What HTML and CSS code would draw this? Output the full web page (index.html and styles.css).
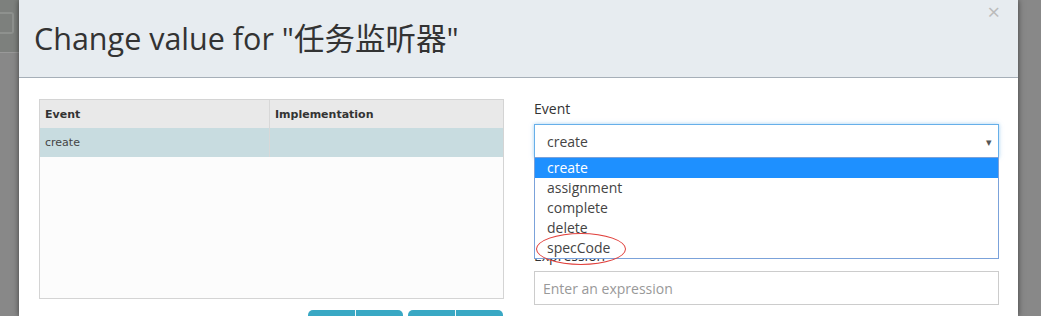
FILE: index.html
```html
<!DOCTYPE html>
<html lang="en">
<head>
    <meta charset="UTF-8">
    <title>Change value</title>
    <link rel="stylesheet" href="styles.css">
</head>
<body>
    <div class="backdrop">
        <div class="backdrop-bar">
            <span class="ghost-icon"></span>
        </div>
    </div>

    <div class="modal">
        <!-- Header -->
        <div class="modal-header">
            <h2 class="modal-title">Change value for "任务监听器"</h2>
            <span class="close">&times;</span>
        </div>

        <!-- Body -->
        <div class="modal-body">
            <div class="col-left">
                <div class="grid">
                    <div class="grid-head">
                        <div class="cell cell-event">Event</div>
                        <div class="cell">Implementation</div>
                    </div>
                    <div class="grid-row selected">
                        <div class="cell cell-event">create</div>
                        <div class="cell"></div>
                    </div>
                </div>
                <div class="btn-bar">
                    <div class="btn-group">
                        <span class="btn"></span>
                        <span class="btn"></span>
                    </div>
                    <div class="btn-group">
                        <span class="btn"></span>
                        <span class="btn"></span>
                    </div>
                </div>
            </div>

            <div class="col-right">
                <div class="form-group event-group">
                    <label class="form-label">Event</label>
                    <div class="select">
                        <span>create</span>
                        <span class="caret">&#9662;</span>
                    </div>
                    <ul class="select-list">
                        <li class="active">create</li>
                        <li>assignment</li>
                        <li>complete</li>
                        <li>delete</li>
                        <li>specCode</li>
                    </ul>
                    <span class="mark"></span>
                </div>
                <div class="form-group expr-group">
                    <label class="form-label">Expression</label>
                    <div class="input">Enter an expression</div>
                </div>
            </div>
        </div>
    </div>
</body>
</html>
```

FILE: styles.css
```css
body {
    margin: 0;
    height: 316px;
    overflow: hidden;
    background: #888;
    font-family: "Open Sans", "Noto Sans CJK SC", sans-serif;
    color: #333;
    display: flex;
    justify-content: flex-start;
}
.backdrop {
    width: 19px;
    flex-shrink: 0;
}
.backdrop-bar {
    height: 53px;
    background: #7d807d;
    border-bottom: 1px solid #999;
    padding-top: 12px;
    box-sizing: border-box;
}
.ghost-icon {
    display: block;
    width: 12px;
    height: 18px;
    border: 2px solid #8e918e;
    border-left: none;
    border-radius: 0 3px 3px 0;
}
.modal {
    width: 999px;
    flex-shrink: 0;
    background: #fff;
    box-shadow: 0 0 6px rgba(0, 0, 0, 0.55);
}
.modal-header {
    height: 78px;
    box-sizing: border-box;
    background: #e7ecf0;
    border-bottom: 1px solid #a6afb8;
    display: flex;
    justify-content: space-between;
    align-items: flex-start;
    padding: 0 15px 0 15px;
}
.modal-title {
    margin: 15px 0 0 0;
    font-weight: normal;
    font-size: 30.5px;
    color: #333;
}
.close {
    font-size: 22px;
    line-height: 22px;
    margin-top: 0;
    margin-right: 3px;
    color: #bbb;
}
.modal-body {
    display: grid;
    grid-template-columns: 465px 465px;
    column-gap: 30px;
    padding: 21px 20px 0 20px;
}

/* grid on the left */
.grid {
    height: 200px;
    box-sizing: border-box;
    border: 1px solid #d4d4d4;
    background: #fcfcfc;
    font-family: "DejaVu Sans", sans-serif;
    font-size: 11px;
}
.grid-head, .grid-row {
    display: flex;
}
.grid-head {
    height: 28px;
    background: #e9e9e9;
    font-weight: bold;
    color: #333;
}
.grid-row {
    height: 29px;
    color: #444;
}
.grid-row.selected {
    background: #c8dce0;
}
.cell {
    flex: 1;
    padding: 0 5px;
    display: flex;
    align-items: center;
}
.cell-event {
    flex: 0 0 230px;
    box-sizing: border-box;
    border-right: 1px solid #d8d8d8;
}
.btn-bar {
    display: flex;
    justify-content: flex-end;
    gap: 5px;
    margin-top: 11px;
    padding-right: 1px;
}
.btn-group {
    display: flex;
}
.btn {
    width: 47px;
    height: 34px;
    background: #39a8c4;
}
.btn + .btn {
    border-left: 1px solid #f0f8fa;
    border-radius: 0 5px 0 0;
}
.btn:first-child {
    border-radius: 5px 0 0 0;
}

/* form on the right */
.form-group {
    display: flex;
    flex-direction: column;
}
.event-group {
    position: relative;
}
.form-label {
    font-size: 14px;
    line-height: 20px;
    color: #333;
    margin-bottom: 5px;
}
.select {
    height: 34px;
    box-sizing: border-box;
    border: 1px solid #66afe9;
    box-shadow: 0 0 4px rgba(102, 175, 233, 0.6);
    display: flex;
    justify-content: space-between;
    align-items: center;
    padding: 0 6px 0 12px;
    font-size: 14px;
    color: #444;
}
.caret {
    font-size: 11px;
    color: #555;
}
.select-list {
    position: absolute;
    top: 58px;
    left: 0;
    right: 0;
    margin: 0;
    padding: 0;
    list-style: none;
    background: #fff;
    border: 1px solid #7ba2da;
    z-index: 2;
}
.select-list li {
    height: 20px;
    line-height: 20px;
    padding-left: 12px;
    font-size: 14px;
    color: #444;
}
.select-list li.active {
    background: #1e90ff;
    color: #fff;
}
.mark {
    position: absolute;
    left: 2px;
    top: 134px;
    width: 88px;
    height: 30px;
    border: 1px solid #e0403c;
    border-radius: 50%;
    z-index: 3;
}
.expr-group {
    margin-top: 88px;
}
.input {
    height: 34px;
    box-sizing: border-box;
    border: 1px solid #ccc;
    padding: 0 8px;
    display: flex;
    align-items: center;
    font-size: 14px;
    color: #999;
}
```
